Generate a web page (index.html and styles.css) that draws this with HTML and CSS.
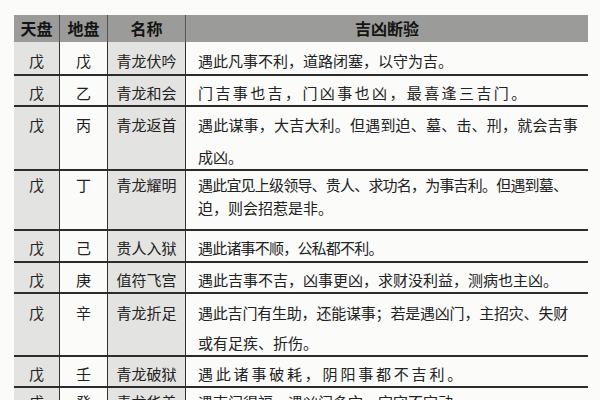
FILE: index.html
```html
<!DOCTYPE html>
<html lang="zh-CN">
<head>
<meta charset="utf-8">
<title>青龙 吉凶断验</title>
<link rel="stylesheet" href="styles.css">
</head>
<body>
<div class="table">
  <div class="row head">
    <div class="c c1">天盘</div>
    <div class="c c2">地盘</div>
    <div class="c c3">名称</div>
    <div class="c c4">吉凶断验</div>
  </div>
  <div class="row r1">
    <div class="c c1">戊</div>
    <div class="c c2">戊</div>
    <div class="c c3">青龙伏吟</div>
    <div class="c c4 ls-a">遇此凡事不利，道路闭塞，以守为吉。</div>
  </div>
  <div class="row r2">
    <div class="c c1">戊</div>
    <div class="c c2">乙</div>
    <div class="c c3">青龙和会</div>
    <div class="c c4 ls-b">门吉事也吉，门凶事也凶，最喜逢三吉门。</div>
  </div>
  <div class="row r3">
    <div class="c c1">戊</div>
    <div class="c c2">丙</div>
    <div class="c c3">青龙返首</div>
    <div class="c c4"><div class="ln ls-c">遇此谋事，大吉大利。但遇到迫、墓、击、刑，就会吉事</div><div class="ln ln2">成凶。</div></div>
  </div>
  <div class="row r4">
    <div class="c c1">戊</div>
    <div class="c c2">丁</div>
    <div class="c c3">青龙耀明</div>
    <div class="c c4"><div class="ln ls-d">遇此宜见上级领导、贵人、求功名，为事吉利。但遇到墓、</div><div class="ln ln2">迫，则会招惹是非。</div></div>
  </div>
  <div class="row r5">
    <div class="c c1">戊</div>
    <div class="c c2">己</div>
    <div class="c c3">贵人入狱</div>
    <div class="c c4 ls-d">遇此诸事不顺，公私都不利。</div>
  </div>
  <div class="row r6">
    <div class="c c1">戊</div>
    <div class="c c2">庚</div>
    <div class="c c3">值符飞宫</div>
    <div class="c c4 ls-a">遇此吉事不吉，凶事更凶，求财没利益，测病也主凶。</div>
  </div>
  <div class="row r7">
    <div class="c c1">戊</div>
    <div class="c c2">辛</div>
    <div class="c c3">青龙折足</div>
    <div class="c c4"><div class="ln ls-e">遇此吉门有生助，还能谋事；若是遇凶门，主招灾、失财</div><div class="ln ln2">或有足疾、折伤。</div></div>
  </div>
  <div class="row r8">
    <div class="c c1">戊</div>
    <div class="c c2">壬</div>
    <div class="c c3">青龙破狱</div>
    <div class="c c4 ls-f">遇此诸事破耗，阴阳事都不吉利。</div>
  </div>
  <div class="row r9">
    <div class="c c1">戊</div>
    <div class="c c2">癸</div>
    <div class="c c3">青龙华盖</div>
    <div class="c c4 ls-a">遇吉门得福，遇凶门多灾，宜守不宜动。</div>
  </div>
</div>
</body>
</html>
```
FILE: styles.css
```css
html, body {
  margin: 0;
  padding: 0;
  background: #fbfbfa;
  overflow: hidden;
}
body {
  width: 600px;
  height: 400px;
  font-family: "Noto Sans CJK SC", "Noto Sans", sans-serif;
  color: #222;
}
.table {
  margin: 15px 0 0 14px;
  width: 574px;
}
.row {
  display: grid;
  grid-template-columns: 46px 48px 78px 402px;
  box-sizing: border-box;
  border-bottom: 2px solid #2c2c2c;
}
.c {
  box-sizing: border-box;
  font-size: 15px;
  line-height: 20px;
  white-space: nowrap;
  overflow: hidden;
}
.c1, .c2, .c3 {
  text-align: center;
  border-right: 1.5px solid #333;
}
.c1, .c3 {
  background: #e3e3e1;
}
.c2, .c4 {
  background: #fbfbfa;
}
.c4 {
  padding-left: 12px;
}
.head {
  height: 27px;
  border-bottom: none;
  background: #9b9b99;
}
.head .c {
  background: transparent;
  font-weight: bold;
  font-size: 16px;
  color: #141414;
  padding-top: 3px;
  border-right-color: #555;
}
.head .c4 {
  text-align: center;
  padding-left: 0;
}
.r1 { height: 34px; }
.r1 .c { padding-top: 9px; }
.r2 { height: 31px; }
.r2 .c { padding-top: 7px; }
.r3 { height: 64px; }
.r3 .c { padding-top: 8px; }
.r3 .ln2 { margin-top: 12px; }
.r4 { height: 60px; }
.r4 .c { padding-top: 4px; }
.r4 .ln2 { margin-top: 3px; }
.r5 { height: 32px; }
.r5 .c { padding-top: 7px; }
.r6 { height: 31px; }
.r6 .c { padding-top: 7px; }
.r7 { height: 63px; }
.r7 .c { padding-top: 9px; }
.r7 .ln2 { margin-top: 10px; }
.r8 { height: 31px; }
.r8 .c { padding-top: 7px; }
.r9 { height: 40px; border-bottom: none; }
.r9 .c { padding-top: 4px; }
.ls-a { letter-spacing: 0; }
.ls-b { letter-spacing: 2.4px; }
.ls-c { letter-spacing: 0.2px; }
.ls-d { letter-spacing: -0.8px; }
.ls-e { letter-spacing: -0.2px; }
.ls-f { letter-spacing: 2.8px; }
```
